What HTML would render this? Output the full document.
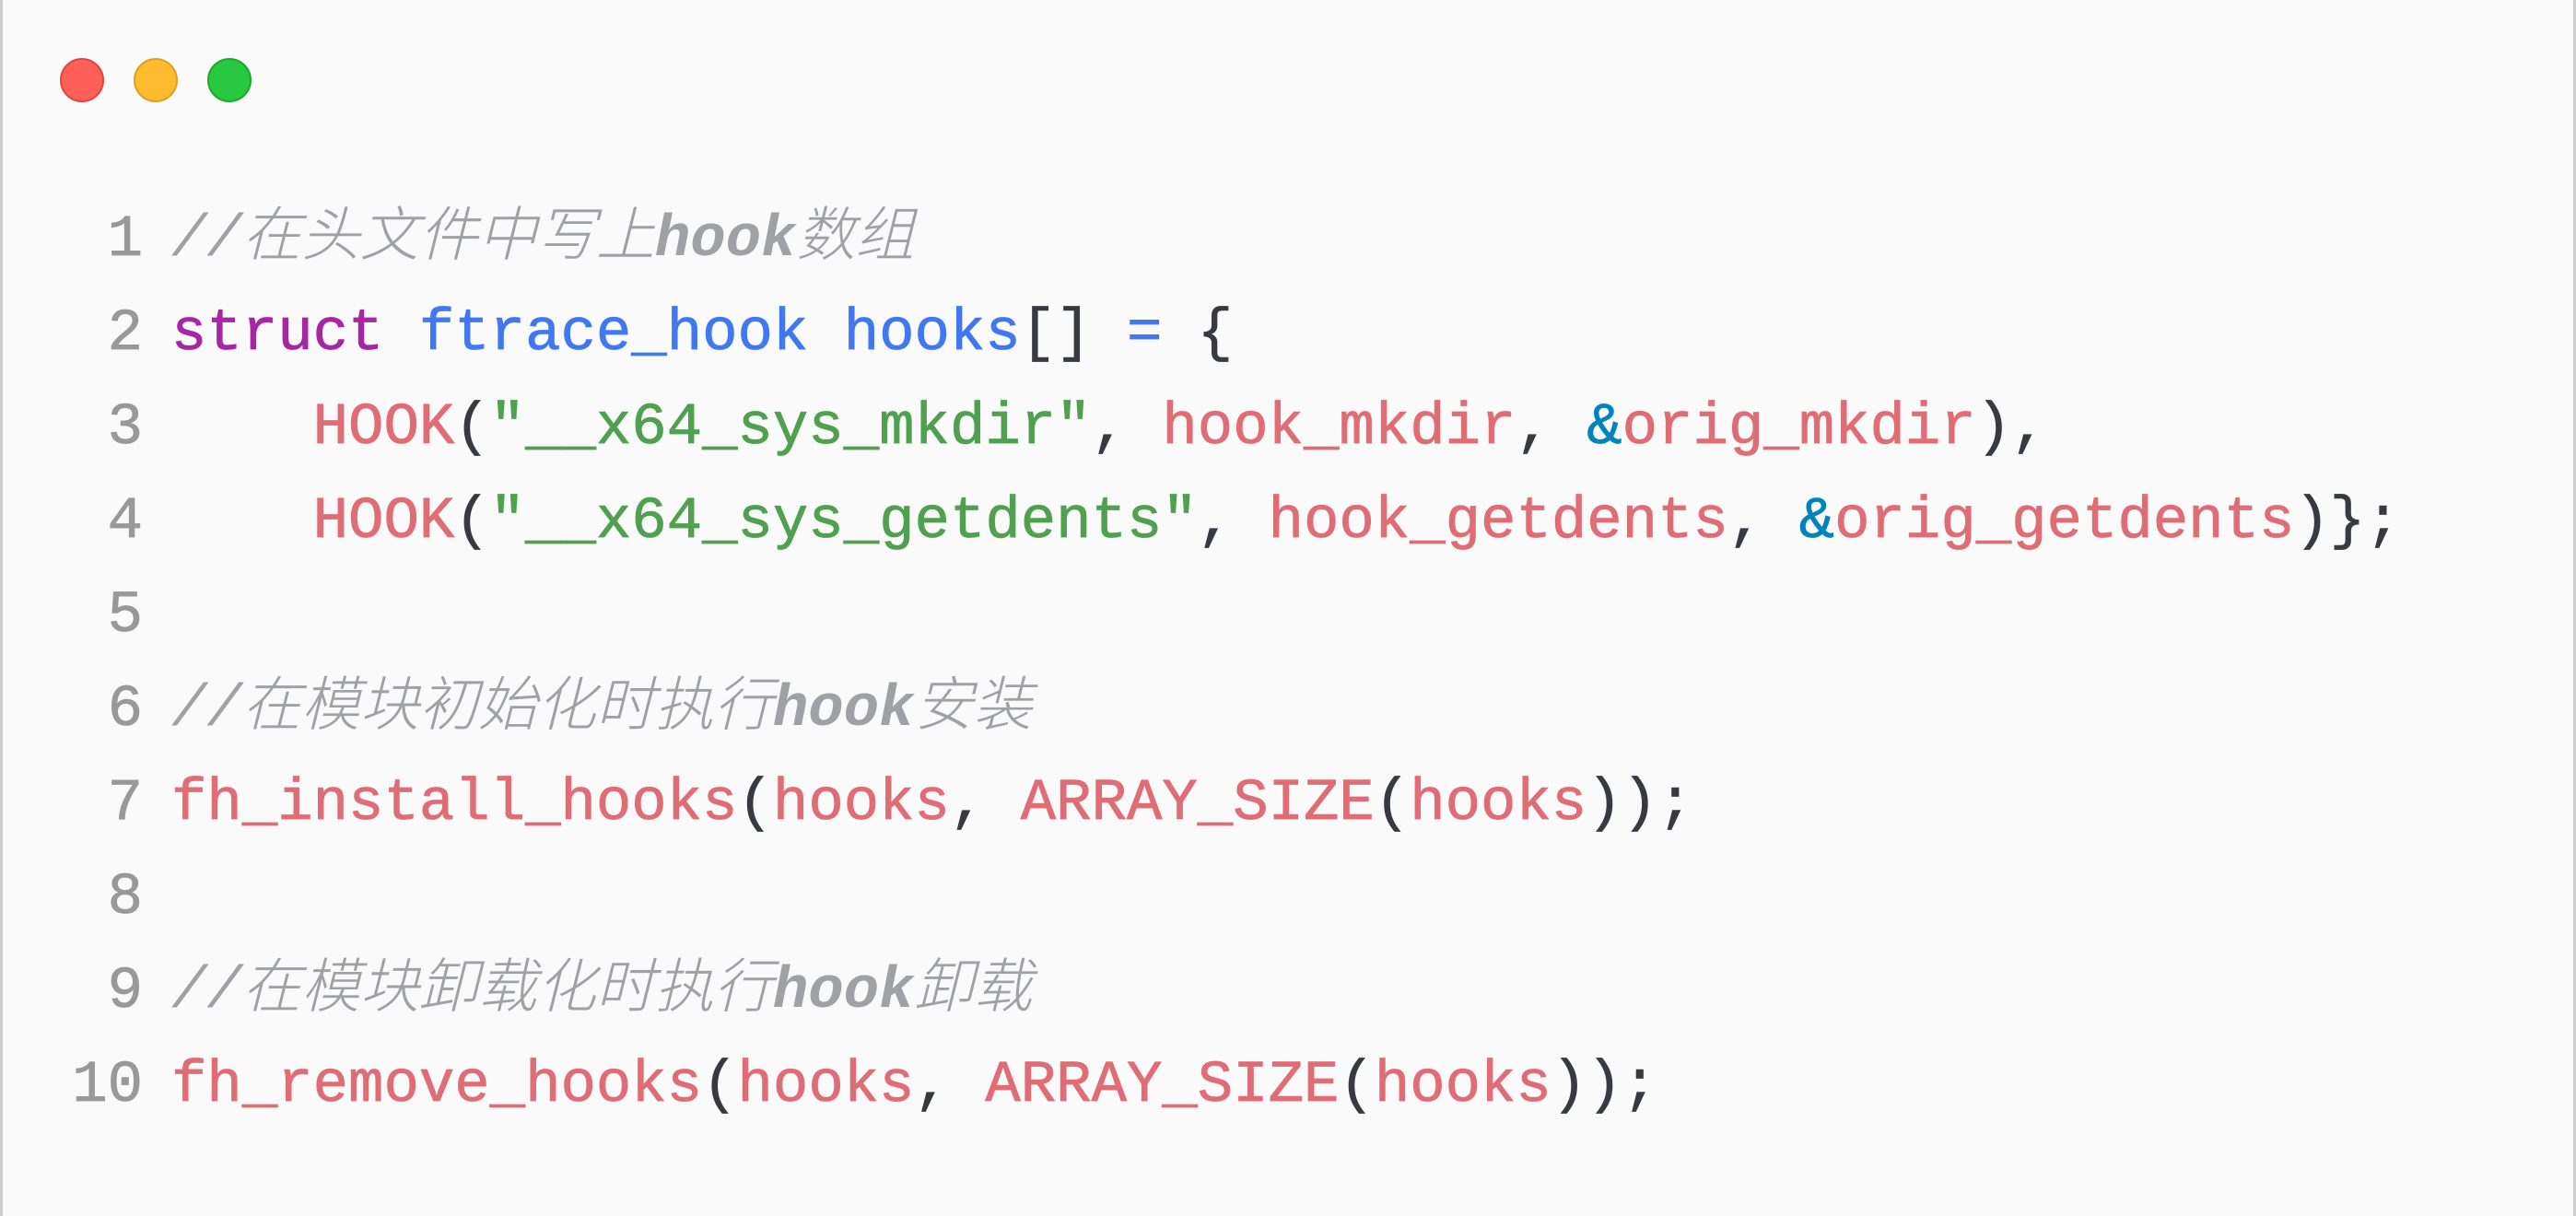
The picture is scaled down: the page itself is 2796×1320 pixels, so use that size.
<!DOCTYPE html>
<html><head><meta charset="utf-8"><style>
html,body{margin:0;padding:0}
body{width:2796px;height:1320px;background:#fafafa;position:relative;overflow:hidden;
border-left:3px solid #ccc;border-right:3px solid #ccc;box-sizing:border-box}
.dot{position:absolute;top:63px;width:48px;height:48px;border-radius:50%;box-sizing:border-box}
.code{position:absolute;left:0;top:0;font-family:"Liberation Mono","Noto Sans CJK SC",monospace;font-size:64px;white-space:pre}
.ln{position:absolute;left:0;width:152px;text-align:right;color:#999;height:102px;line-height:102px;-webkit-text-stroke:0.8px currentColor}
.tx{position:absolute;left:183px;height:102px;line-height:102px;color:#383a42;-webkit-text-stroke:0.8px currentColor}
.c{color:#a0a1a7;font-style:italic;-webkit-text-stroke:0;line-height:0}
.c .z{font-family:"Noto Sans CJK SC",sans-serif;font-weight:300;line-height:0}
.c b{font-weight:bold}
.k{color:#a626a4}.b{color:#4078f2}.r{color:#e06c75}.g{color:#50a14f}.a{color:#0184bc}
</style></head><body>
<div class="dot" style="left:62px;background:#ff5f57;border:2px solid #e0443e"></div>
<div class="dot" style="left:142px;background:#febc2e;border:2px solid #dea123"></div>
<div class="dot" style="left:222px;background:#28c840;border:2px solid #1aab29"></div>
<div class="code">
<div class="ln" style="top:210px">1</div><div class="tx" style="top:210px"><span class="c">//<span class="z">在头文件中写上</span><b>hook</b><span class="z">数组</span></span></div>
<div class="ln" style="top:312px">2</div><div class="tx" style="top:312px"><span class="k">struct</span> <span class="b">ftrace_hook</span> <span class="b">hooks</span>[] <span class="b">=</span> {</div>
<div class="ln" style="top:414px">3</div><div class="tx" style="top:414px">    <span class="r">HOOK</span>(<span class="g">"__x64_sys_mkdir"</span>, <span class="r">hook_mkdir</span>, <span class="a">&amp;</span><span class="r">orig_mkdir</span>),</div>
<div class="ln" style="top:516px">4</div><div class="tx" style="top:516px">    <span class="r">HOOK</span>(<span class="g">"__x64_sys_getdents"</span>, <span class="r">hook_getdents</span>, <span class="a">&amp;</span><span class="r">orig_getdents</span>)};</div>
<div class="ln" style="top:618px">5</div>
<div class="ln" style="top:720px">6</div><div class="tx" style="top:720px"><span class="c">//<span class="z">在模块初始化时执行</span><b>hook</b><span class="z">安装</span></span></div>
<div class="ln" style="top:822px">7</div><div class="tx" style="top:822px"><span class="r">fh_install_hooks</span>(<span class="r">hooks</span>, <span class="r">ARRAY_SIZE</span>(<span class="r">hooks</span>));</div>
<div class="ln" style="top:924px">8</div>
<div class="ln" style="top:1026px">9</div><div class="tx" style="top:1026px"><span class="c">//<span class="z">在模块卸载化时执行</span><b>hook</b><span class="z">卸载</span></span></div>
<div class="ln" style="top:1128px">10</div><div class="tx" style="top:1128px"><span class="r">fh_remove_hooks</span>(<span class="r">hooks</span>, <span class="r">ARRAY_SIZE</span>(<span class="r">hooks</span>));</div>
</div>
</body></html>
